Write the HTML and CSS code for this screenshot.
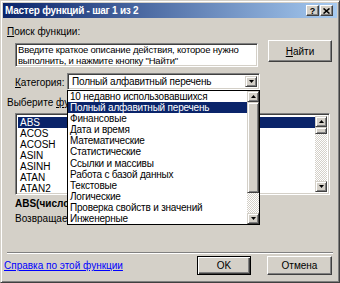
FILE: index.html
```html
<!DOCTYPE html>
<html lang="ru">
<head>
  <meta charset="UTF-8">
  <title>Мастер функций - шаг 1 из 2</title>
  <link rel="stylesheet" href="styles.css">
</head>
<body>
  <div class="window">
    <div class="titlebar">
      <span class="title">Мастер функций - шаг 1 из 2</span>
      <div class="caption-buttons">
        <span class="cap-btn raised help">?</span>
        <span class="cap-btn raised">
          <svg width="7" height="6" viewBox="0 0 7 6"><path d="M0.5 0.5L6.5 5.5M6.5 0.5L0.5 5.5" stroke="#000" stroke-width="1.6"/></svg>
        </span>
      </div>
    </div>

    <div class="content">
      <div class="label search-label"><u>П</u>оиск функции:</div>
      <div class="search-row">
        <div class="search-box sunken">Введите краткое описание действия, которое нужно выполнить, и нажмите кнопку "Найти"</div>
        <div class="btn raised find-btn"><u>Н</u>айти</div>
      </div>

      <div class="category-row">
        <span class="label category-label"><u>К</u>атегория:</span>
        <div class="combo sunken">
          <span class="combo-text">Полный алфавитный перечень</span>
          <span class="sb-btn combo-btn">
            <svg width="5" height="3" viewBox="0 0 5 3"><path d="M0 0h5L2.5 3z"/></svg>
          </span>

          <!-- opened category list lies over the dialog -->
          <div class="dropdown">
            <ul class="items">
              <li>10 недавно использовавшихся</li>
              <li class="selected">Полный алфавитный перечень</li>
              <li>Финансовые</li>
              <li>Дата и время</li>
              <li>Математические</li>
              <li>Статистические</li>
              <li>Ссылки и массивы</li>
              <li>Работа с базой данных</li>
              <li>Текстовые</li>
              <li>Логические</li>
              <li>Проверка свойств и значений</li>
              <li>Инженерные</li>
            </ul>
            <div class="scrollbar">
              <span class="sb-btn"><svg width="5" height="3" viewBox="0 0 5 3"><path d="M0 3h5L2.5 0z"/></svg></span>
              <span class="sb-thumb drop-thumb"></span>
              <span class="sb-track"></span>
              <span class="sb-btn"><svg width="5" height="3" viewBox="0 0 5 3"><path d="M0 0h5L2.5 3z"/></svg></span>
            </div>
          </div>
        </div>
      </div>

      <div class="label choose-label">Выберите <u>ф</u>ункцию:</div>
      <div class="func-list sunken">
        <ul class="items">
          <li class="selected">ABS</li>
          <li>ACOS</li>
          <li>ACOSH</li>
          <li>ASIN</li>
          <li>ASINH</li>
          <li>ATAN</li>
          <li>ATAN2</li>
        </ul>
        <div class="scrollbar">
          <span class="sb-btn"><svg width="5" height="3" viewBox="0 0 5 3"><path d="M0 3h5L2.5 0z"/></svg></span>
          <span class="sb-thumb list-thumb"></span>
          <span class="sb-track"></span>
          <span class="sb-btn"><svg width="5" height="3" viewBox="0 0 5 3"><path d="M0 0h5L2.5 3z"/></svg></span>
        </div>
      </div>

      <div class="func-sig">ABS(число)</div>
      <div class="func-desc">Возвращает модуль (абсолютную величину) числа.</div>

      <div class="separator"></div>

      <div class="footer">
        <a class="help-link" href="#">Справка по этой функции</a>
        <div class="btn raised default ok-btn">OK</div>
        <div class="btn raised cancel-btn">Отмена</div>
      </div>
    </div>
  </div>
</body>
</html>
```

FILE: styles.css
```css
* { box-sizing: border-box; }
body {
  margin: 0;
  font-family: "Liberation Sans", Arial, sans-serif;
  font-size: 10px;
  color: #000;
  background: #d4d0c8;
}
ul { margin: 0; padding: 0; list-style: none; }

.window {
  width: 340px;
  height: 283px;
  padding: 2px;
  background: #d4d0c8;
  border: 1px solid;
  border-color: #d4d0c8 #404040 #404040 #d4d0c8;
  box-shadow: inset 1px 1px #fff, inset -1px -1px #808080;
}

/* classic 3d edges */
.raised {
  background: #d4d0c8;
  border: 1px solid;
  border-color: #fff #404040 #404040 #fff;
  box-shadow: inset -1px -1px #808080;
}
.sunken {
  background: #fff;
  border: 1px solid;
  border-color: #808080 #fff #fff #808080;
  box-shadow: inset 1px 1px #404040, inset -1px -1px #d4d0c8;
}

.titlebar {
  height: 15px;
  display: flex;
  align-items: center;
  justify-content: space-between;
  padding: 0 4px 0 2px;
  background: linear-gradient(to right, #0a246a, #a6caf0);
  color: #fff;
  font-weight: bold;
}
.title { letter-spacing: -0.25px; }
.caption-buttons { display: flex; gap: 1px; }
.cap-btn {
  width: 13px;
  height: 11px;
  display: flex;
  align-items: center;
  justify-content: center;
  color: #000;
  font-size: 9px;
  font-weight: bold;
}

.content { padding: 0 4px; }
.label { line-height: 13px; }
.search-label { margin-top: 7px; }

.search-row {
  display: flex;
  align-items: flex-start;
  margin-top: 2px;
}
.search-box {
  margin: 3px 0 0 8px;
  width: 243px;
  height: 24px;
  padding: 1px 2px;
  font-size: 9.5px;
  letter-spacing: -0.2px;
  line-height: 10.5px;
}
.btn {
  display: flex;
  align-items: center;
  justify-content: center;
}
.find-btn {
  margin-left: 10px;
  width: 64px;
  height: 22px;
}

.category-row {
  display: flex;
  align-items: center;
  margin-top: 6px;
  height: 17px;
}
.category-label {
  margin-left: 8px;
  width: 52px;
  padding-top: 2px;
}
.combo {
  position: relative;
  width: 193px;
  height: 17px;
  display: flex;
  align-items: center;
  justify-content: space-between;
  padding: 2px;
}
.combo-text { padding-left: 2px; letter-spacing: -0.2px; }
.combo-btn { height: 13px; }

.sb-btn {
  width: 12px;
  height: 11px;
  flex: none;
  display: flex;
  align-items: center;
  justify-content: center;
  background: #d4d0c8;
  border: 1px solid;
  border-color: #d4d0c8 #404040 #404040 #d4d0c8;
  box-shadow: inset 1px 1px #fff, inset -1px -1px #808080;
}
.sb-thumb {
  flex: none;
  background: #d4d0c8;
  border: 1px solid;
  border-color: #d4d0c8 #404040 #404040 #d4d0c8;
  box-shadow: inset 1px 1px #fff, inset -1px -1px #808080;
}
.sb-track {
  flex: 1;
  background: repeating-conic-gradient(#fff 0 25%, #d4d0c8 0 50%) 0 0 / 2px 2px;
}
.scrollbar {
  width: 12px;
  display: flex;
  flex-direction: column;
}

.items li {
  height: 11px;
  line-height: 11px;
  padding-left: 2px;
  white-space: nowrap;
}
.items .selected {
  background: #0a246a;
  color: #fff;
}

.dropdown {
  position: absolute;
  top: 16px;
  left: -1px;
  width: 193px;
  height: 135px;
  border: 1px solid #000;
  background: #fff;
  display: flex;
  z-index: 2;
}
.dropdown .items { flex: 1; overflow: hidden; }
.dropdown .items li {
  height: 11.1px;
  line-height: 11.1px;
  letter-spacing: -0.2px;
}
.drop-thumb { height: 91px; }

.choose-label { margin-top: 6px; }
.func-list {
  margin: 4px 0 0 8px;
  width: 315px;
  height: 82px;
  padding: 2px;
  display: flex;
}
.func-list .items { flex: 1; padding-top: 1px; overflow: hidden; }
.list-thumb { height: 7px; }

.func-sig {
  margin: 2px 0 0 8px;
  line-height: 13px;
  font-weight: bold;
}
.func-desc {
  margin: 2px 0 0 8px;
  line-height: 13px;
  white-space: nowrap;
}

.separator {
  margin-top: 27px;
  height: 2px;
  border-top: 1px solid #808080;
  border-bottom: 1px solid #fff;
}

.footer {
  display: flex;
  align-items: center;
  margin-top: 2px;
  height: 19px;
}
.help-link {
  margin-left: -3px;
  color: #0000ff;
}
.ok-btn {
  margin-left: auto;
  width: 54px;
  height: 19px;
}
.default {
  border-color: #000;
  box-shadow: inset 1px 1px #fff, inset -1px -1px #404040, inset -2px -2px #808080;
}
.cancel-btn {
  margin-left: 16px;
  margin-right: 1px;
  width: 65px;
  height: 19px;
}
```
